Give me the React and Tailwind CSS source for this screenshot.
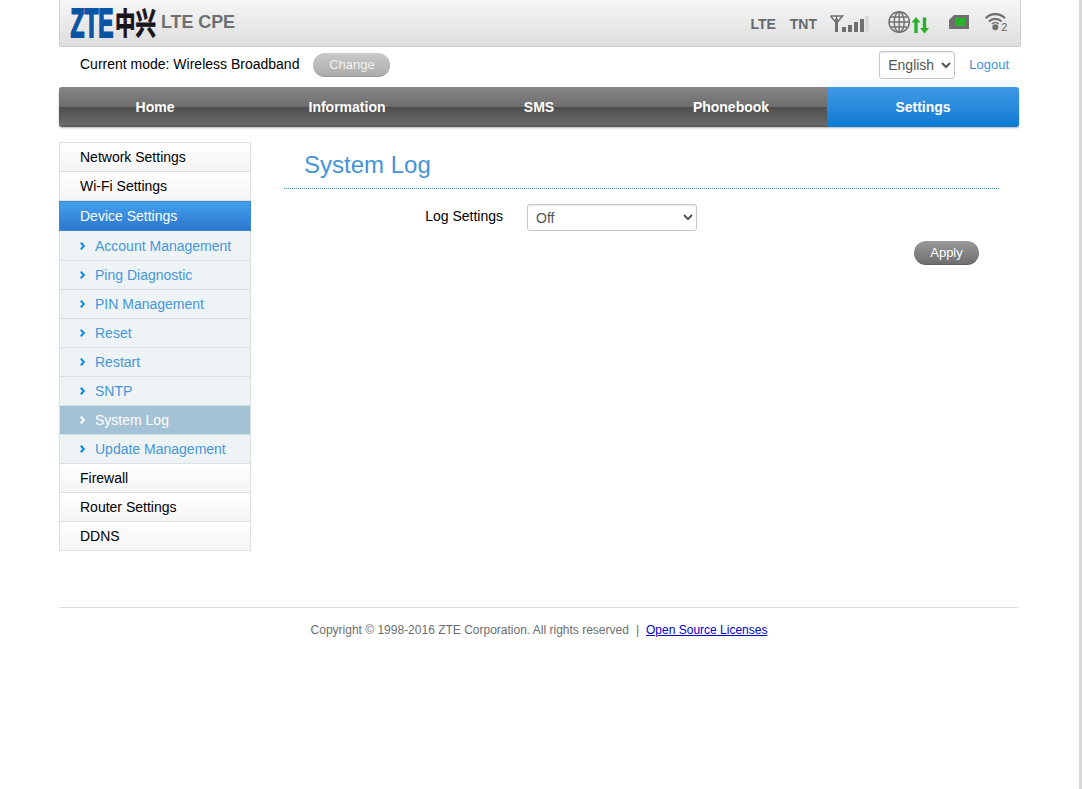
import React, { useState } from 'react';

const tabs = ['Home', 'Information', 'SMS', 'Phonebook', 'Settings'];

const deviceItems = [
  'Account Management',
  'Ping Diagnostic',
  'PIN Management',
  'Reset',
  'Restart',
  'SNTP',
  'System Log',
  'Update Management',
];

function Logo() {
  return (
    <svg width="88" height="46" viewBox="0 0 88 46" className="block overflow-visible">
      <g transform="translate(1.5 37) scale(1 1.36)">
        <text
          x="0"
          y="0"
          fontSize="30"
          fontWeight="700"
          fontFamily="'Liberation Sans', Arial, sans-serif"
          textLength="43"
          lengthAdjust="spacingAndGlyphs"
          fill="#0a54a5"
          stroke="#0a54a5"
          strokeWidth="1.4"
        >
          ZTE
        </text>
      </g>
      <g transform="translate(46 34) scale(1 1.42)">
        <text
          x="0"
          y="0"
          fontSize="21"
          fontWeight="700"
          fontFamily="'Noto Sans CJK SC', sans-serif"
          textLength="41"
          lengthAdjust="spacingAndGlyphs"
          fill="#17141c"
          stroke="#17141c"
          strokeWidth="0.6"
        >
          中兴
        </text>
      </g>
    </svg>
  );
}

function SignalIcon() {
  return (
    <svg width="40" height="18" viewBox="0 0 40 18" className="block">
      <path d="M0.5 1H12.5L7.5 7M0.5 1L5.5 7M6.5 1V17" fill="none" stroke="#6f6f6f" strokeWidth="1.5" />
      <path d="M5 4H8V17H5Z" fill="#6f6f6f" />
      <path d="M12 12h4v5h-4zM18 10h4v7h-4zM24 7h4v10h-4zM30 4h4v13h-4z" fill="#6f6f6f" />
      <path d="M35 1h4v16h-4z" fill="#dadada" />
    </svg>
  );
}

function GlobeIcon() {
  return (
    <svg width="42" height="24" viewBox="0 0 42 24" className="block">
      <g fill="none" stroke="#707070" strokeWidth="1.4">
        <circle cx="11.2" cy="11" r="10.2" />
        <ellipse cx="11.2" cy="11" rx="5" ry="10" />
        <path d="M11.2 1V21M1 11H21M2.5 6H19.5M2.5 16H19.5" />
      </g>
      <path d="M28 6L32.5 11.5H29.7V22H26.3V11.5H23.5ZM36.5 22.5L32 17H34.8V6.5H38.2V17H41Z" fill="#2bb02b" />
    </svg>
  );
}

function SimIcon() {
  return (
    <svg width="20" height="14" viewBox="0 0 20 14" className="block">
      <path d="M5 0H20V14H0V5Z" fill="#6f6f6f" />
      <rect x="6" y="3" width="11" height="8" fill="#27b327" />
    </svg>
  );
}

function WifiIcon() {
  return (
    <svg width="24" height="22" viewBox="0 0 24 22" className="block overflow-visible">
      <g fill="none" stroke="#6f6f6f" strokeWidth="2.2">
        <path d="M0.7 6.2C6 0.8 14.5 0.8 20 6.2" />
        <path d="M4 9.6C7.5 6 13 6 16.5 9.6" />
        <path d="M6.8 12C8.8 10 11.8 10 13.8 12" strokeWidth="1.4" />
      </g>
      <circle cx="10.3" cy="15.3" r="3" fill="#6f6f6f" />
      <text x="16.3" y="18.5" fontSize="11" fontWeight="400" fontFamily="'Liberation Sans', sans-serif" fill="#666">2</text>
    </svg>
  );
}

function Arrow({ active }) {
  return (
    <svg width="5" height="8" viewBox="0 0 5 8" className="mr-[10px] block">
      <path d="M0.8 0.8L3.9 4L0.8 7.2" fill="none" stroke={active ? '#ffffff' : '#0b8ae0'} strokeWidth="2" />
    </svg>
  );
}

function MenuItem({ children }) {
  return (
    <li className="flex h-[29px] items-center border-x border-b border-[#dfdfdf] bg-gradient-to-b from-white to-[#f4f4f4] pl-5">
      {children}
    </li>
  );
}

export default function App() {
  const [language, setLanguage] = useState('English');
  const [logMode, setLogMode] = useState('Off');

  return (
    <div className="flex h-[789px] bg-white font-['Liberation_Sans',Arial,sans-serif] text-sm text-black">
      <div className="flex-1 pl-[59px]">
        <header className="flex h-[47px] w-[962px] justify-between border-x border-b border-[#cfcfcf] bg-gradient-to-b from-[#f6f6f6] to-[#dedede]">
          <div className="flex pl-[9px]">
            <Logo />
            <span className="ml-[4px] pt-[8px] text-lg font-bold tracking-[-0.1px] text-[#6c7072]">LTE CPE</span>
          </div>
          <div className="flex pr-[11px] text-sm font-bold text-[#666a6c]">
            <span className="mr-[14px] pt-[14px]">LTE</span>
            <span className="mr-[13px] pt-[14px]">TNT</span>
            <div className="mr-[18px] pt-[15px]"><SignalIcon /></div>
            <div className="mr-[19px] pt-[11px]"><GlobeIcon /></div>
            <div className="mr-4 pt-[15px]"><SimIcon /></div>
            <div className="pt-[12px]"><WifiIcon /></div>
          </div>
        </header>

        <div className="flex h-10 w-[960px] justify-between">
          <div className="flex items-start pl-[21px] pt-[6px]">
            <span className="mr-[14px] pt-px">Current mode: Wireless Broadband</span>
            <button className="h-6 w-[77px] rounded-full border-b border-[#999] bg-gradient-to-b from-[#c9c9c9] to-[#acacac] pt-[2px] text-[13px] text-[#f2f2f2]">
              Change
            </button>
          </div>
          <div className="flex items-start pr-[10px] pt-1">
            <select
              value={language}
              onChange={(e) => setLanguage(e.target.value)}
              className="mr-[14px] h-7 w-[76px] rounded-[3px] border border-[#c6c6c6] bg-white pl-1 text-sm text-[#555] shadow-[inset_0_1px_1px_rgba(0,0,0,0.08)]"
            >
              <option>English</option>
            </select>
            <a href="#logout" className="pt-[5px] text-[13px] leading-[18px] text-[#3f92d9]">Logout</a>
          </div>
        </div>

        <nav className="flex h-10 w-[960px] overflow-hidden rounded-[3px] shadow-[0_1px_2px_rgba(0,0,0,0.3)]">
          {tabs.map((tab) => (
            <a
              key={tab}
              href={`#${tab.toLowerCase()}`}
              className={
                tab === 'Settings'
                  ? 'flex w-48 items-center justify-center bg-gradient-to-b from-[#3f9ae5] to-[#067ad3] font-bold text-white'
                  : 'flex w-48 items-center justify-center border-b-2 border-[#5c5c5c] bg-[linear-gradient(#868686_0%,#6d6d6d_52%,#4d4d4d_53%,#6b6b6b_100%)] pt-[2px] font-bold text-white'
              }
            >
              {tab}
            </a>
          ))}
        </nav>

        <div className="flex h-[481px] w-[960px] border-b border-[#dddddd] pt-[15px]">
          <aside className="w-48">
            <ul className="border-t border-[#dfdfdf]">
              <MenuItem>Network Settings</MenuItem>
              <MenuItem>Wi-Fi Settings</MenuItem>
              <li className="flex h-[30px] items-center border border-[#3b87d8] bg-gradient-to-b from-[#43a0ee] to-[#2e77cf] pl-5 text-white">
                Device Settings
              </li>
              {deviceItems.map((item, i) => (
                <li
                  key={item}
                  className={`flex items-center border-x border-b border-[#dbe0e3] pl-5 ${i === 0 ? 'h-[30px]' : 'h-[29px]'} ${
                    item === 'System Log' ? 'bg-[#a4c2d6] text-white' : 'bg-[#eef3f6] text-[#4596db]'
                  }`}
                >
                  <Arrow active={item === 'System Log'} />
                  {item}
                </li>
              ))}
              <MenuItem>Firewall</MenuItem>
              <MenuItem>Router Settings</MenuItem>
              <MenuItem>DDNS</MenuItem>
            </ul>
          </aside>

          <main className="ml-[33px] w-[715px]">
            <h1 className="h-[47px] border-b border-dotted border-[#3d8fb5] pl-5 pt-[5px] text-2xl leading-9 text-[#4394d8]">
              System Log
            </h1>
            <div className="flex pt-[15px]">
              <label htmlFor="log" className="w-[219px] pt-[2px] text-right">Log Settings</label>
              <select
                id="log"
                value={logMode}
                onChange={(e) => setLogMode(e.target.value)}
                className="ml-6 h-[27px] w-[170px] rounded-[3px] border border-[#c6c6c6] bg-white pl-1 text-sm text-[#555] shadow-[inset_0_1px_1px_rgba(0,0,0,0.08)]"
              >
                <option>Off</option>
                <option>On</option>
              </select>
            </div>
            <div className="flex justify-end pr-5 pt-[10px]">
              <button className="h-6 w-[65px] rounded-full border-b border-[#5e5e5e] bg-gradient-to-b from-[#999] to-[#6f6f6f] pt-[2px] text-[13px] text-white">
                Apply
              </button>
            </div>
          </main>
        </div>

        <footer className="flex w-[960px] justify-center pt-[12px] text-xs leading-5 text-[#6b6f70]">
          <span>Copyright © 1998-2016 ZTE Corporation. All rights reserved</span>
          <span className="mx-[7px]">|</span>
          <a href="#licenses" className="text-[#0000cc] underline">Open Source Licenses</a>
        </footer>
      </div>
      <div className="w-[3px] bg-[#d8d8d8]" />
    </div>
  );
}
